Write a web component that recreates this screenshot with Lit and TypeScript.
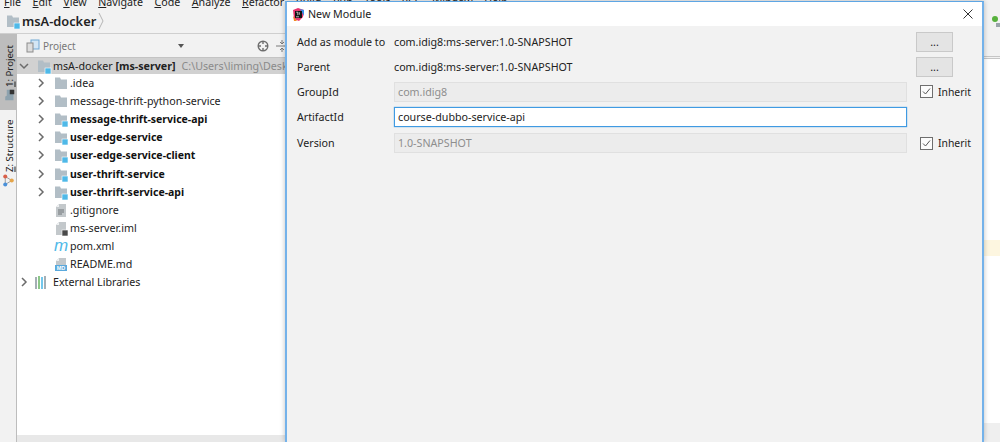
import { LitElement, html, css, svg } from "lit";
import { customElement } from "lit/decorators.js";

const folder = (badge: boolean) => html`<svg class="ico" viewBox="0 0 16 16" width="16" height="16">
  <path d="M2 2.500h5l1 2h6v9.500H2z" fill="#b2bec6"/>
  ${badge ? svg`<rect x="9" y="10" width="6" height="6" fill="#4fb9e8" stroke="#fff" stroke-width=".6"/>` : ""}
</svg>`;

const chev = html`<svg class="chev" viewBox="0 0 10 10" width="10" height="10"><path d="M3 1l4 4-4 4" fill="none" stroke="#6b6b6b" stroke-width="1.5"/></svg>`;

const fileBase = svg`<path d="M6 2h7v13H3V5z" fill="#c3c8cb"/><path d="M6 2v3H3z" fill="#eef0f1"/>`;

type Row = { name: string; bold?: boolean; kind: string };
const rows: Row[] = [
  { name: ".idea", kind: "folder" },
  { name: "message-thrift-python-service", kind: "folder" },
  { name: "message-thrift-service-api", bold: true, kind: "module" },
  { name: "user-edge-service", bold: true, kind: "module" },
  { name: "user-edge-service-client", bold: true, kind: "module" },
  { name: "user-thrift-service", bold: true, kind: "module" },
  { name: "user-thrift-service-api", bold: true, kind: "module" },
  { name: ".gitignore", kind: "text" },
  { name: "ms-server.iml", kind: "iml" },
  { name: "pom.xml", kind: "pom" },
  { name: "README.md", kind: "md" },
];

const icon = (k: string) => {
  if (k === "folder") return folder(false);
  if (k === "module") return folder(true);
  if (k === "text")
    return html`<svg class="ico" viewBox="0 0 16 16" width="16" height="16">${fileBase}<path d="M5 8h6M5 10h6M5 12h4" stroke="#6e7478" stroke-width="1"/></svg>`;
  if (k === "iml")
    return html`<svg class="ico" viewBox="0 0 16 16" width="16" height="16">${fileBase}<rect x="9" y="10" width="6" height="6" fill="#4a4a4a" stroke="#fff" stroke-width=".6"/></svg>`;
  if (k === "pom") return html`<span class="pom ico">m</span>`;
  return html`<svg class="ico" viewBox="0 0 16 16" width="16" height="16">${fileBase}<rect x="2" y="9" width="12" height="6" fill="#5aa9dc"/><text x="8" y="14" font-size="5.500" font-weight="700" text-anchor="middle" fill="#fff" font-family="Liberation Sans">MD</text></svg>`;
};

@customElement("app-root")
export class AppRoot extends LitElement {
  static styles = css`
    :host {
      display: block;
      position: relative;
      width: 1000px;
      height: 442px;
      overflow: hidden;
      background: #f2f2f2;
      font-family: "Noto Sans", sans-serif;
      font-size: 10.7px;
      color: #222;
    }
    .menu {
      height: 9px;
      display: flex;
      gap: 11.5px;
      padding-left: 4px;
      overflow: hidden;
      line-height: 5px;
      align-items: flex-start;
      white-space: nowrap;
    }
    .menu span:first-letter { text-decoration: underline; }
    .nav {
      height: 25px;
      box-sizing: border-box;
      display: flex;
      align-items: center;
      gap: 2px;
      padding-left: 5px;
      border-bottom: 1px solid #cfcfcf;
    }
    .nav b { font-size: 12.800px; font-weight: 600; margin-left: -1px; }
    .main { display: flex; height: 408px; }
    .side {
      width: 17px;
      box-sizing: border-box;
      border-right: 1px solid #bdbdbd;
      flex: none;
      display: flex;
      flex-direction: column;
    }
    .tab {
      writing-mode: vertical-rl;
      transform: rotate(180deg);
      font-size: 9.600px;
      display: flex;
      align-items: center;
      gap: 2px;
      width: 16px;
      box-sizing: border-box;
      padding-right: 2px;
    }
    .tab.on { height: 76px; background: #bdbdbd; padding-top: 9px; }
    .tab.off { height: 79px; padding-top: 2px; }
    .tab svg { transform: rotate(90deg); }
    u { text-decoration: underline; }
    .panel { flex: 1; display: flex; flex-direction: column; background: #fff; min-width: 0; }
    .phead {
      height: 24px;
      box-sizing: border-box;
      background: #f2f2f2;
      border-bottom: 1px solid #c4c4c4;
      display: flex;
      align-items: center;
      padding-left: 9px;
      gap: 3px;
      color: #777;
      font-size: 10px;
      flex: none;
    }
    .caret { width: 0; height: 0; border: 3.500px solid transparent; border-top: 4px solid #555; border-bottom: 0; margin-left: 99px; }
    .picons { display: flex; gap: 7px; margin-left: 70px; align-items: center; }
    .root {
      height: 16px;
      background: #d1d1d1;
      display: flex;
      align-items: center;
      flex: none;
      white-space: nowrap;
      overflow: hidden;
      padding-left: 2px;
      gap: 1px;
    }
    .root .rico { margin-left: 6px; height: 16px; }
    .root .path { color: #8a8a8a; margin-left: 5px; }
    .root b { font-weight: 700; }
    .chev.down { transform: rotate(90deg); }
    .tree { display: flex; flex-direction: column; }
    .row { height: 18.1px; display: flex; align-items: center; padding-left: 19px; white-space: nowrap; }
    .row .chev { margin-right: 7px; flex: none; }
    .row .sp { width: 17px; flex: none; }
    .row .ico { margin-right: 1px; flex: none; }
    .row.b { font-weight: 700; font-size: 10.500px; color: #111; }
    .ext { padding-left: 2px; }
    .ext .chev { margin-right: 5px; }
    .ext svg.ico { margin-right: 3px; }
    .pom { font: italic 400 17px/16px "Liberation Sans", sans-serif; color: #4fb9e8; width: 16px; display: inline-block; text-align: center; }
    .status { position: absolute; left: 17px; right: 0; bottom: 0; height: 7px; background: #e8e8e8; }
    .right { position: absolute; left: 984px; top: 0; right: 0; bottom: 0; display: flex; flex-direction: column; }
    .rtool { height: 56px; background: #f2f2f2; flex: none; }
    .rline { height: 3px; background: #f2f2f2; border-top: 1px solid #c6c6c6; border-bottom: 1px solid #c6c6c6; box-sizing: border-box; flex: none; }
    .rbody { height: 364px; background: #fff; flex: none; padding-top: 181px; box-sizing: border-box; }
    .mark { height: 16px; background: #fdf6e0; }
    .rfoot { flex: 1; background: #efefef; }
    .dot { position: absolute; left: 992px; top: 16px; width: 6px; height: 6px; border-radius: 50%; background: #57b13c; }
    .dot2 { position: absolute; left: 996px; top: 23px; width: 4px; height: 4px; background: #9aa4aa; }
    .dialog {
      position: absolute;
      left: 285px;
      top: 1px;
      width: 699px;
      height: 441px;
      box-sizing: border-box;
      border: 2px solid #74b2ea;
      border-top: 1px solid #5ea6e4;
      border-bottom: 0;
      background: #f2f2f2;
      box-shadow: 0 0 5px rgba(0, 0, 0, 0.25);
      display: flex;
      flex-direction: column;
    }
    .title {
      height: 24px;
      flex: none;
      background: #fff;
      display: flex;
      align-items: center;
      padding-left: 5px;
      gap: 3px;
      position: relative;
    }
    .close { position: absolute; right: 9px; top: 7px; }
    .form {
      display: grid;
      grid-template-columns: 97px 513px 1fr;
      grid-template-rows: 24px 25px 25px 26px 26px;
      padding: 4px 0 0 10px;
      align-items: center;
    }
    .field {
      height: 20px;
      box-sizing: border-box;
      background: #ececec;
      border: 1px solid #e0e0e0;
      color: #8e8e8e;
      padding: 0 3px;
      line-height: 18px;
      width: 513px;
    }
    .field.active {
      background: #fff;
      color: #222;
      border: 1px solid #3f9ae2;
      box-shadow: 0 0 1px #3f9ae2;
    }
    .btn {
      width: 37px;
      height: 20px;
      box-sizing: border-box;
      background: #e4e4e4;
      border: 1px solid #c9c9c9;
      margin-left: 9px;
      text-align: center;
      line-height: 18px;
    }
    .check { display: flex; align-items: center; gap: 5px; margin-left: 13px; font-size: 10.400px; }
    .box { width: 11px; height: 11px; border: 1px solid #6e6e6e; background: #fbfbfb; display: block; flex: none; }
  `;

  render() {
    return html`
      <div class="menu">
        ${["File", "Edit", "View", "Navigate", "Code", "Analyze", "Refactor", "Build", "Run", "Tools", "VCS", "Window", "Help"].map((m) => html`<span>${m}</span>`)}
      </div>
      <div class="nav">
        ${folder(true)}<b>msA-docker</b>
        <svg width="6" height="18" viewBox="0 0 6 18"><path d="M1 1l4 8-4 8" fill="none" stroke="#b5b5b5"/></svg>
      </div>
      <div class="main">
        <div class="side">
          <div class="tab on">
            <svg width="12" height="12" viewBox="0 0 16 16"><path d="M1 3h5l1 2h8v9H1z" fill="#8da2ae"/><rect x="9" y="9" width="6" height="6" fill="#333"/></svg>
            <span><u>1</u>: Project</span>
          </div>
          <div class="tab off">
            <svg width="13" height="13" viewBox="0 0 16 16"><path d="M3 4l5 8 5-8z" fill="none" stroke="#8a8a8a"/><circle cx="3" cy="4" r="2.500" fill="#4a90d9"/><circle cx="13" cy="4" r="2.500" fill="#d9604a"/><circle cx="8" cy="12" r="2.500" fill="#e5a54a"/></svg>
            <span><u>Z</u>: Structure</span>
          </div>
        </div>
        <div class="panel">
          <div class="phead">
            <svg width="14" height="14" viewBox="0 0 14 14"><rect x="5" y="1" width="8" height="9" fill="#d3e6f5" stroke="#6fa7d4"/><rect x="1" y="4" width="6" height="9" fill="#ddd" stroke="#8b8b8b"/></svg>
            <span>Project</span>
            <span class="caret"></span>
            <span class="picons">
              <svg width="12" height="12" viewBox="0 0 12 12"><circle cx="6" cy="6" r="4.800" fill="none" stroke="#6e6e6e" stroke-width="1.400"/><path d="M6 1v3M6 8v3M1 6h3M8 6h3" stroke="#6e6e6e" stroke-width="1.400"/></svg>
              <svg width="12" height="12" viewBox="0 0 12 12"><path d="M0 6h12" stroke="#7a7a7a"/><path d="M6 0v4M4 2l2 2 2-2M6 12V8M4 10l2-2 2 2" fill="none" stroke="#7a7a7a"/></svg>
            </span>
          </div>
          <div class="root">
            <svg class="chev down" viewBox="0 0 10 10" width="10" height="10"><path d="M3 1l4 4-4 4" fill="none" stroke="#6b6b6b" stroke-width="1.500"/></svg>
            <span class="rico">${folder(true)}</span>
            <span>msA-docker <b>[ms-server]</b></span>
            <span class="path">C:\\Users\\liming\\Desktop\\msA-docker</span>
          </div>
          <div class="tree">
            ${rows.map(
              (r, i) => html`<div class="row ${r.bold ? "b" : ""}">
                ${i < 7 ? chev : html`<span class="sp"></span>`}${icon(r.kind)}<span>${r.name}</span>
              </div>`
            )}
            <div class="row ext">
              ${chev}
              <svg class="ico" viewBox="0 0 16 16" width="16" height="16">
                <path d="M2 3v12" stroke="#8e9ba3" stroke-width="1.600"/><path d="M5 2v13" stroke="#6fb96a" stroke-width="1.600"/><path d="M8 3v12" stroke="#4fb9e8" stroke-width="1.600"/><path d="M11 2v13" stroke="#8e9ba3" stroke-width="1.600"/>
              </svg>
              <span>External Libraries</span>
            </div>
          </div>
        </div>
      </div>
      <div class="status"></div>
      <div class="right">
        <div class="rtool"></div>
        <div class="rline"></div>
        <div class="rbody"><div class="mark"></div></div>
        <div class="rfoot"></div>
      </div>
      <div class="dot"></div>
      <div class="dot2"></div>
      <div class="dialog">
        <div class="title">
          <svg width="13" height="13" viewBox="0 0 13 13">
            <path d="M1 2l5-2 6 2-1 7-4 4-5-2z" fill="#e8326e"/><path d="M8 1l4 1v6z" fill="#3a8fe6"/><path d="M1 8l4 5H2z" fill="#f08a24"/>
            <rect x="3" y="3" width="7" height="7" fill="#111"/><path d="M4 8.800h3" stroke="#fff" stroke-width=".7"/><path d="M4.200 4.200h1.600v3M7.300 4.200v2.600" stroke="#fff" stroke-width=".7" fill="none"/>
          </svg>
          <span>New Module</span>
          <svg class="close" width="10" height="10" viewBox="0 0 10 10"><path d="M.5.5l9 9M9.500.5l-9 9" stroke="#333" stroke-width="1"/></svg>
        </div>
        <div class="form">
          <span>Add as module to</span><span>com.idig8:ms-server:1.0-SNAPSHOT</span><div class="btn">...</div>
          <span>Parent</span><span>com.idig8:ms-server:1.0-SNAPSHOT</span><div class="btn">...</div>
          <span>GroupId</span><div class="field">com.idig8</div>${this.inherit()}
          <span>ArtifactId</span><div class="field active">course-dubbo-service-api</div><span></span>
          <span>Version</span><div class="field">1.0-SNAPSHOT</div>${this.inherit()}
        </div>
      </div>
    `;
  }

  inherit() {
    return html`<label class="check"><svg class="box" viewBox="0 0 11 11"><path d="M2 5.500l2.500 2.500L9 2.500" fill="none" stroke="#555" stroke-width="1"/></svg><span>Inherit</span></label>`;
  }
}
